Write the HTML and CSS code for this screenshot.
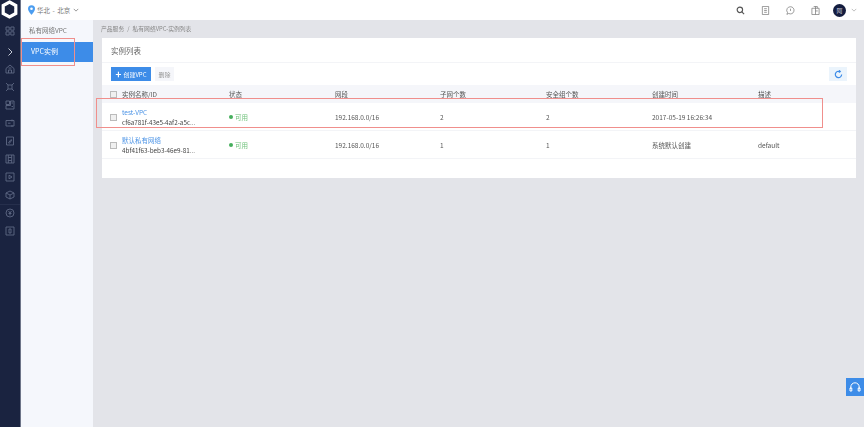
FILE: index.html
```
<!DOCTYPE html>
<html lang="zh">
<head>
<meta charset="utf-8">
<title>VPC实例</title>
<link rel="stylesheet" href="styles.css">
</head>
<body>
<div class="app">
  <aside class="rail">
    <div class="logo"><svg width="20" height="20" viewBox="0 0 20 20"><path d="M9.500 2 15.800 5.500v8L9.500 17 3.200 13.500v-8z" fill="none" stroke="#fff" stroke-width="3.200"/><path d="M6 4.200 9.500 2l3.500 2.200" fill="none" stroke="#fff" stroke-width="2"/><path d="M11 7.200l3 1.600" stroke="#1a2340" stroke-width="1.400"/></svg></div>
    <div class="rail-items">
      <svg class="ri" viewBox="0 0 10 10"><path d="M1 1h3.200v3.200H1zM5.800 1H9v3.200H5.800zM1 5.800h3.200V9H1zM5.800 5.800H9V9H5.800z"/></svg>
      <svg class="ri ri-arrow" viewBox="0 0 10 10"><path d="M3.500 1.500 7 5l-3.500 3.500"/></svg>
      <svg class="ri" viewBox="0 0 10 10"><path d="M1 4.500 5 1l4 3.500V9H1zM3.500 9V6h3v3M3.500 4h3"/></svg>
      <svg class="ri" viewBox="0 0 10 10"><path d="M3 3h4v4H3zM1 1l2 2M9 1 7 3M1 9l2-2M9 9 7 7"/></svg>
      <svg class="ri" viewBox="0 0 10 10"><path d="M1 1h3.500v3.500H1zM5.500 1H9v8H1V5.500h4.500zM6.500 3h1.500M6.500 6.500h1.500"/></svg>
      <svg class="ri" viewBox="0 0 10 10"><path d="M1 2.500h8v5.500H1zM3 5.200h2.500M7 1.500v2M7 7v2"/></svg>
      <svg class="ri" viewBox="0 0 10 10"><path d="M1.500 1h7v8h-7zM3.500 6.800l2.500-3.300.8.700-2.500 3.200z"/></svg>
      <svg class="ri" viewBox="0 0 10 10"><path d="M1 1h8v8H1zM3.300 1v8M6.700 1v8M3.300 3.500h3.400M3.300 6.500h3.400"/></svg>
      <svg class="ri" viewBox="0 0 10 10"><path d="M1 1h8v8H1zM4 3.200 7 5 4 6.800z"/></svg>
      <svg class="ri" viewBox="0 0 10 10"><path d="M5 1 9 3v4L5 9 1 7V3zM1 3l4 2 4-2M5 5v4"/></svg>
      <div class="rail-sep"></div>
      <svg class="ri" viewBox="0 0 10 10"><circle cx="5" cy="5" r="4"/><path d="M3.500 3 5 5l1.500-2M5 5v2.500M3.500 5.500h3"/></svg>
      <svg class="ri" viewBox="0 0 10 10"><path d="M1 1h8v8H1zM4 3h2v4H4z"/></svg>
    </div>
  </aside>
  <div class="main">
    <header class="topbar">
      <div class="region">
        <svg class="pin" viewBox="0 0 8 11"><path d="M4 0a4 4 0 0 1 4 4c0 2.500-4 7-4 7S0 6.500 0 4a4 4 0 0 1 4-4z" fill="#4b9df0"/><circle cx="4" cy="4" r="1.500" fill="#fff"/></svg>
        <span>华北 - 北京</span>
        <svg class="chev" viewBox="0 0 8 5"><path d="M1 1l3 3 3-3"/></svg>
      </div>
      <div class="tools">
        <svg class="tool search" viewBox="0 0 10 10"><circle cx="4.300" cy="4.300" r="3"/><path d="m6.500 6.500 2.500 2.500"/></svg>
        <svg class="tool" viewBox="0 0 10 10"><path d="M1.500 .5h7v9h-7zM3.500 3h3M3.500 5h3M3.500 7h3"/></svg>
        <svg class="tool" viewBox="0 0 10 10"><path d="M5 .8a4 4 0 1 1-2 7.500L1 9.300l.7-2A4 4 0 0 1 5 .8zM5 3v2.500"/></svg>
        <svg class="tool" viewBox="0 0 10 10"><path d="M1 2.500h8v7H1zM5 .5v9M3 .5h4v2M5 5.500h2.500"/></svg>
        <div class="user"><span class="avatar">阿</span><svg class="chev chev-light" viewBox="0 0 8 5"><path d="M1 1l3 3 3-3"/></svg></div>
      </div>
    </header>
    <div class="body">
      <nav class="subnav">
        <div class="subnav-title">私有网络VPC</div>
        <div class="subnav-item">VPC实例</div>
      </nav>
      <main class="content">
        <div class="crumbs"><span>产品服务</span><span>/</span><span>私有网络VPC-实例列表</span></div>
        <section class="card">
          <h1 class="card-title">实例列表</h1>
          <div class="toolbar">
            <button class="btn-primary"><b>+</b>创建VPC</button>
            <button class="btn-muted">删除</button>
            <button class="btn-refresh"><svg viewBox="0 0 10 10"><path d="M8.500 5A3.500 3.500 0 1 1 6.500 1.800M5.800.3l1.200 1.500-1.700.9"/></svg></button>
          </div>
          <div class="table">
            <div class="row head">
              <div class="cell c-check"><i class="check"></i></div>
              <div class="cell c-name">实例名称/ID</div>
              <div class="cell c-state">状态</div>
              <div class="cell c-net">网段</div>
              <div class="cell c-sub">子网个数</div>
              <div class="cell c-sec">安全组个数</div>
              <div class="cell c-time">创建时间</div>
              <div class="cell c-desc">描述</div>
            </div>
            <div class="row">
              <div class="cell c-check"><i class="check"></i></div>
              <div class="cell c-name"><a>test-VPC</a><span>cf6a781f-43e5-4af2-a5c...</span></div>
              <div class="cell c-state"><i class="dot"></i><em>可用</em></div>
              <div class="cell c-net">192.168.0.0/16</div>
              <div class="cell c-sub">2</div>
              <div class="cell c-sec">2</div>
              <div class="cell c-time">2017-05-19 16:26:34</div>
              <div class="cell c-desc"></div>
            </div>
            <div class="row">
              <div class="cell c-check"><i class="check"></i></div>
              <div class="cell c-name"><a>默认私有网络</a><span>4bf41f63-beb3-46e9-81...</span></div>
              <div class="cell c-state"><i class="dot"></i><em>可用</em></div>
              <div class="cell c-net">192.168.0.0/16</div>
              <div class="cell c-sub">1</div>
              <div class="cell c-sec">1</div>
              <div class="cell c-time">系统默认创建</div>
              <div class="cell c-desc">default</div>
            </div>
          </div>
        </section>
      </main>
    </div>
  </div>
</div>
<div class="mark mark-nav"></div>
<div class="mark mark-row"></div>
<div class="support"><svg viewBox="0 0 12 12"><path d="M1.800 8V6a4.200 4.200 0 0 1 8.400 0v2M1 7h1.800v3H1zM9.200 7H11v3H9.200z"/></svg></div>
</body>
</html>
```
FILE: styles.css
```
* { box-sizing: border-box; }
html, body { margin: 0; height: 100%; overflow: hidden; }
body { font-family: "Noto Sans CJK SC", "Liberation Sans", sans-serif; font-size: 6.5px; font-weight: 400; color: #555; background: #e3e4e9; filter: blur(.35px); }
.app { display: flex; height: 427px; }
.rail { width: 21px; flex: none; background: #1a2340; border-right: 1px solid #6d7488; display: flex; flex-direction: column; }
.logo { height: 20px; display: flex; align-items: center; justify-content: center; margin-left: -1px; }
.rail-items { display: flex; flex-direction: column; align-items: center; padding-top: 6px; gap: 8px; }
.ri { width: 10px; height: 10px; fill: none; stroke: #5f6985; stroke-width: .9; }
.ri-arrow { stroke: #c5cad6; stroke-width: 1; margin-top: 3px; margin-bottom: -1px; }
.rail-sep { width: 20px; height: 1px; background: #262f4c; margin: -4px 0 -5px; }
.main { flex: 1; min-width: 0; display: flex; flex-direction: column; }
.topbar { height: 20px; flex: none; background: #fff; display: flex; align-items: center; justify-content: space-between; padding-left: 6px; }
.region { display: flex; align-items: center; gap: 3px; color: #777; font-size: 6.500px; word-spacing: 1px; }
.pin { width: 7px; height: 10px; margin-left: 1px; margin-right: -1px; }
.chev { width: 6px; height: 4px; fill: none; stroke: #777; stroke-width: 1; }
.chev-light { stroke: #aaa; }
.tools { display: flex; align-items: center; gap: 16px; padding-right: 7px; }
.tool { width: 9px; height: 9px; fill: none; stroke: #777; stroke-width: .8; }
.search { stroke: #555; stroke-width: 1.300; }
.user { display: flex; align-items: center; gap: 5px; margin-left: -3px; }
.avatar { width: 13px; height: 13px; border-radius: 50%; background: #141d3f; color: #ccd; font-size: 6px; display: flex; align-items: center; justify-content: center; }
.body { flex: 1; display: flex; min-height: 0; }
.subnav { width: 72px; flex: none; background: #f5f7fc; padding-top: 3px; }
.subnav-title { height: 19px; line-height: 15px; padding-left: 8px; color: #777; }
.subnav-item { height: 20px; line-height: 18px; padding-left: 10px; background: #3d8ce8; color: #fff; font-size: 7px; }
.content { flex: 1; min-width: 0; padding: 0 8px 0 9px; }
.crumbs { height: 17px; margin-bottom: 1px; display: flex; align-items: center; gap: 3px; margin-left: -1px; color: #888; font-size: 5.800px; }
.card { height: 140px; background: #fff; }
.card-title { margin: 0; height: 25px; line-height: 25px; padding-left: 9px; font-size: 7.500px; font-weight: 400; color: #666; border-bottom: 1px solid #f3f4f7; }
.toolbar { height: 22px; padding: 4px 9px 0 9px; display: flex; align-items: flex-start; gap: 4px; }
.toolbar button { border: 0; padding: 0; font: inherit; font-size: 6px; display: flex; align-items: center; justify-content: center; height: 14px; }
.btn-primary { width: 40px; background: #3d8ce8; color: #fff; gap: 2px; }
.btn-primary b { font-size: 10px; font-weight: 700; line-height: 10px; }
.btn-muted { width: 19px; background: #f5f6fa; color: #999; }
.toolbar .btn-refresh { width: 18px; margin-left: auto; background: #ebf4fc; }
.btn-refresh svg { width: 9px; height: 9px; fill: none; stroke: #3d8ce8; stroke-width: 1.300; }
.row { display: flex; height: 28px; border-bottom: 1px solid #f3f4f7; align-items: center; }
.head { height: 18px; background: #f5f6fa; border: 0; }
.cell { min-width: 0; color: #555; }
.c-check { width: 20px; display: flex; justify-content: center; padding-left: 3px; padding-top: 1px; }
.c-name { width: 107px; display: flex; flex-direction: column; gap: 1px; line-height: 9px; padding-top: 1px; }
.head .c-name { display: block; padding-top: 0; }
.c-name a { color: #4b93e6; }
.c-name span { color: #444; font-size: 6.300px; }
.c-state { width: 106px; display: flex; align-items: center; gap: 2px; }
.c-state em { font-style: normal; color: #6fc27a; }
.c-net { width: 105px; }
.c-sub { width: 106px; }
.c-sec { width: 106px; }
.c-time { width: 106px; }
.c-desc { flex: 1; }
.check { display: block; width: 7px; height: 7px; background: #f0f0f0; border: 1px solid #bbb; }
.dot { width: 4px; height: 4px; border-radius: 50%; background: #45ae5c; }
.mark { position: absolute; border: 1px solid #f08f8c; }
.mark-nav { left: 21px; top: 38px; width: 54px; height: 28px; }
.mark-row { left: 96px; top: 98px; width: 727px; height: 30px; }
.support { position: absolute; right: 0; top: 378px; width: 18px; height: 18px; background: #3d8ce8; display: flex; align-items: center; justify-content: center; }
.support svg { width: 12px; height: 12px; fill: none; stroke: #fff; stroke-width: 1; }
```
